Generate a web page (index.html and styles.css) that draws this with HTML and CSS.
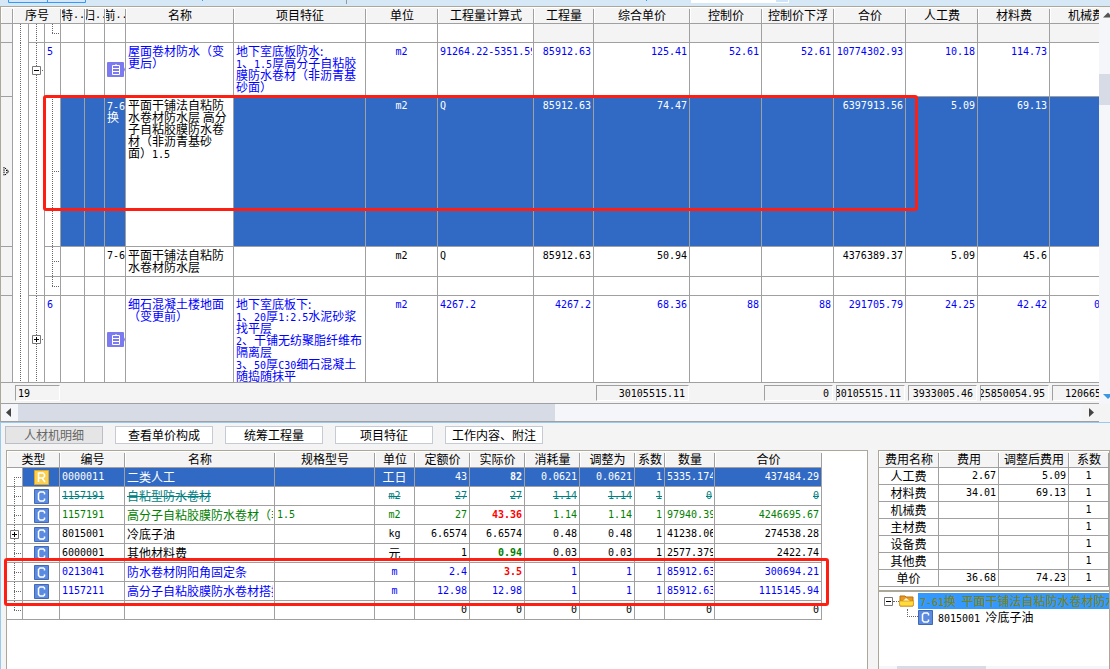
FILE: index.html
```html
<!DOCTYPE html>
<html lang="zh-CN">
<head>
<meta charset="utf-8">
<title>工程量清单</title>
<link rel="stylesheet" href="styles.css">
</head>
<body>
<svg class="defs" aria-hidden="true">
  <symbol id="plus" viewBox="0 0 9 9"><path d="M.5 .5h8v8h-8z" fill="#fff" stroke="#777"/><path d="M2 4.500h5M4.500 2v5" stroke="#000"/></symbol>
  <symbol id="minus" viewBox="0 0 9 9"><path d="M.5 .5h8v8h-8z" fill="#fff" stroke="#777"/><path d="M2 4.500h5" stroke="#000"/></symbol>
  <symbol id="own" viewBox="0 0 18 15"><rect width="17" height="15" rx="1" fill="#7b7bef"/><path d="M17 5l1 2.500l-1 2.500z" fill="#7b7bef"/><path d="M5.500 3.500h7v9h-7zM5.500 6.500h7M5.500 9.500h7M9 2v1.500" fill="none" stroke="#fff"/></symbol>
  <symbol id="mat" viewBox="0 0 15 15"><path d="M.5 .5h14v14h-14z" fill="#5b8be0" stroke="#4169b5"/><path d="M10.500 5.500V4L9.500 3H6L4.500 4.500v6L6 12h3.500l1-1V9.500" fill="none" stroke="#fff" stroke-width="1.500"/></symbol>
  <symbol id="lab" viewBox="0 0 15 15"><path d="M.5 .5h14v14h-14z" fill="#fbd050" stroke="#e0a520"/><path d="M4.500 12V3H9l1.500 1.500v2L9 8H5M8 8l3 4" fill="none" stroke="#fff" stroke-width="1.500"/></symbol>
  <symbol id="folder" viewBox="0 0 15 12"><path d="M1 1h5l1 1h7v9H1z" fill="#e79a1c" stroke="#b9700c"/><path d="M4 6l3-3 4 3z" fill="#fff6d0"/><path d="M0 6h15l-1 5H1z" fill="#ffdc3c" stroke="#d08a10" stroke-width=".7"/></symbol>
</svg>

<header class="ribbon">
  <svg width="1110" height="6" aria-hidden="true"><path d="M8.500 0v2.500h77V0M47.500 0v2" fill="none" stroke="#3399ff"/><path d="M202.500 0v1M646.500 0v1" stroke="#3399ff"/><path d="M346.500 0v4" stroke="#999"/><path d="M691 0h98v3h-98z" fill="#fff"/><path d="M776 0h12v2h-12z" fill="#cfe3f5"/></svg>
</header>

<section class="upper">
  <div class="upper-main">
    <div class="grid-view">
      <table class="grid bill">
        <colgroup><col class="w12"><col class="w16"><col class="w16"><col class="w16"><col class="w24"><col class="w20"><col class="w21"><col class="w108"><col class="w132"><col class="w72"><col class="w96"><col class="w60"><col class="w96"><col class="w72"><col class="w72"><col class="w72"><col class="w72"><col class="w72"><col class="w72"></colgroup>
        <thead>
          <tr><th></th><th colspan="3">序号</th><th><div class="cut">特<span class="n">..</span></div></th><th><div class="cut">归<span class="n">..</span></div></th><th><div class="cut">前<span class="n">..</span></div></th><th>名称</th><th>项目特征</th><th>单位</th><th>工程量计算式</th><th>工程量</th><th>综合单价</th><th>控制价</th><th>控制价下浮</th><th>合价</th><th>人工费</th><th>材料费</th><th>机械费</th></tr>
        </thead>
        <tbody>
          <tr class="h19"><td class="mark"></td><td class="line open"></td><td class="line"></td><td class="line end"></td><td></td><td></td><td></td><td></td><td></td><td></td><td></td><td class="off"></td><td class="off"></td><td class="off"></td><td class="off"></td><td class="off"></td><td class="off"></td><td class="off"></td><td class="off"></td></tr>
          <tr class="h54 blue"><td class="mark"></td><td class="line open"></td><td class="line tick open mid"><svg class="box"><use href="#minus"/></svg></td><td class="n">5</td><td></td><td></td><td class="mid"><svg class="own"><use href="#own"/></svg></td><td>屋面卷材防水（变<br>更后）</td><td>地下室底板防水:<br><span class="n">1</span>、<span class="n">1.5</span>厚高分子自粘胶<br>膜防水卷材（非沥青基<br>砂面）</td><td class="n c">m2</td><td class="n"><div class="clip">91264.22-5351.59</div></td><td class="n r">85912.63</td><td class="n r">125.41</td><td class="n r">52.61</td><td class="n r">52.61</td><td class="n r">10774302.93</td><td class="n r">10.18</td><td class="n r">114.73</td><td></td></tr>
          <tr class="h150 picked"><td class="mark mid"><svg class="cursor"><path d="M1 0v9M2 1l4 3.500L2 8M3 3l1.500 1.500L3 6" fill="none" stroke="#000" stroke-dasharray="1.500 .8"/></svg></td><td class="line open"></td><td class="line open"></td><td class="line tick"></td><td></td><td></td><td><span class="n">7-6</span><br>换</td><td class="edit">平面干铺法自粘防<br>水卷材防水层 高分<br>子自粘胶膜防水卷<br>材（非沥青基砂<br>面）<span class="n">1.5</span></td><td></td><td class="n c">m2</td><td class="n">Q</td><td class="n r">85912.63</td><td class="n r">74.47</td><td></td><td></td><td class="n r">6397913.56</td><td class="n r">5.09</td><td class="n r">69.13</td><td></td></tr>
          <tr class="h30"><td class="mark"></td><td class="line open"></td><td class="line open"></td><td class="line tick"></td><td></td><td></td><td class="n">7-6</td><td>平面干铺法自粘防<br>水卷材防水层</td><td></td><td class="n c">m2</td><td class="n">Q</td><td class="n r">85912.63</td><td class="n r">50.94</td><td></td><td></td><td class="n r">4376389.37</td><td class="n r">5.09</td><td class="n r">45.6</td><td></td></tr>
          <tr class="h19"><td class="mark"></td><td class="line open"></td><td class="line"></td><td class="line end"></td><td></td><td></td><td></td><td></td><td></td><td></td><td></td><td></td><td></td><td></td><td></td><td></td><td></td><td></td><td></td></tr>
          <tr class="h87 blue"><td class="mark"></td><td class="line"></td><td class="line tick mid"><svg class="box"><use href="#plus"/></svg></td><td class="n">6</td><td></td><td></td><td class="mid"><svg class="own"><use href="#own"/></svg></td><td>细石混凝土楼地面<br>（变更前）</td><td>地下室底板下:<br><span class="n">1</span>、<span class="n">20</span>厚<span class="n">1:2.5</span>水泥砂浆<br>找平层<br><span class="n">2</span>、干铺无纺聚脂纤维布<br>隔离层<br><span class="n">3</span>、<span class="n">50</span>厚<span class="n">C30</span>细石混凝土<br>随捣随抹平</td><td class="n c">m2</td><td class="n">4267.2</td><td class="n r">4267.2</td><td class="n r">68.36</td><td class="n r">88</td><td class="n r">88</td><td class="n r">291705.79</td><td class="n r">24.25</td><td class="n r">42.42</td><td class="n cost">0</td></tr>
        </tbody>
        <tfoot>
          <tr><td></td><td colspan="3"><div class="sum left">19</div></td><td colspan="8"></td><td><div class="sum">30105515.11</div></td><td></td><td><div class="sum">0</div></td><td><div class="sum">30105515.11</div></td><td><div class="sum">3933005.46</div></td><td><div class="sum">25850054.95</div></td><td><div class="sum left more">120665</div></td></tr>
        </tfoot>
      </table>
    </div>
    <div class="vbar">
      <svg width="11" height="12"><path d="M4 10.500l5-5 5 5z" fill="#555"/></svg>
      <div class="thumb"></div>
      <svg width="11" height="12"><path d="M4 2l5 5 5-5z" fill="#3b97e3"/></svg>
    </div>
  </div>
  <div class="hbar">
    <svg width="17" height="17"><path d="M10 4v9L5 8.500z" fill="#444"/></svg>
    <div class="thumb"></div><div class="rest"></div>
    <svg class="next" width="17" height="17"><path d="M7 4v9l5-4.500z" fill="#444"/></svg>
  </div>
  <div class="callout first"></div>
</section>

<section class="lower">
  <nav class="tabs">
    <button type="button" class="on">人材机明细</button><button type="button">查看单价构成</button><button type="button">统筹工程量</button><button type="button">项目特征</button><button type="button">工作内容、附注</button>
  </nav>
  <div class="panels">
    <div class="panel main">
      <table class="grid parts">
        <colgroup><col class="w16"><col class="w37"><col class="w65"><col class="w150"><col class="w100"><col class="w40"><col class="w55"><col class="w55"><col class="w55"><col class="w55"><col class="w30"><col class="w50"><col class="w107"></colgroup>
        <thead><tr><th colspan="2">类型</th><th>编号</th><th>名称</th><th>规格型号</th><th>单位</th><th>定额价</th><th>实际价</th><th>消耗量</th><th>调整为</th><th>系数</th><th>数量</th><th>合价</th></tr></thead>
        <tbody>
          <tr class="picked"><td class="line begin"></td><td class="c ico"><svg class="type"><use href="#lab"/></svg></td><td class="n">0000011</td><td>二类人工</td><td></td><td class="c">工日</td><td class="n r">43</td><td class="n r"><b>82</b></td><td class="n r">0.0621</td><td class="n r">0.0621</td><td class="n r">1</td><td class="n"><div class="clip">5335.174</div></td><td class="n r">437484.29</td></tr>
          <tr class="gone"><td class="line tick"></td><td class="c ico"><svg class="type"><use href="#mat"/></svg></td><td class="n">1157191</td><td>自粘型防水卷材</td><td></td><td class="n c">m2</td><td class="n r">27</td><td class="n r">27</td><td class="n r">1.14</td><td class="n r">1.14</td><td class="n r">1</td><td class="n r">0</td><td class="n r">0</td></tr>
          <tr class="green"><td class="line tick"></td><td class="c ico"><svg class="type"><use href="#mat"/></svg></td><td class="n">1157191</td><td><div class="clip">高分子自粘胶膜防水卷材（非</div></td><td class="n">1.5</td><td class="n c">m2</td><td class="n r">27</td><td class="n r"><b class="up">43.36</b></td><td class="n r">1.14</td><td class="n r">1.14</td><td class="n r">1</td><td class="n"><div class="clip">97940.39</div></td><td class="n r">4246695.67</td></tr>
          <tr><td class="line tick"><svg class="box"><use href="#plus"/></svg></td><td class="c ico"><svg class="type"><use href="#mat"/></svg></td><td class="n">8015001</td><td>冷底子油</td><td></td><td class="n c">kg</td><td class="n r">6.6574</td><td class="n r">6.6574</td><td class="n r">0.48</td><td class="n r">0.48</td><td class="n r">1</td><td class="n"><div class="clip">41238.06</div></td><td class="n r">274538.28</td></tr>
          <tr><td class="line tick"></td><td class="c ico"><svg class="type"><use href="#mat"/></svg></td><td class="n">6000001</td><td>其他材料费</td><td></td><td class="c">元</td><td class="n r">1</td><td class="n r"><b class="down">0.94</b></td><td class="n r">0.03</td><td class="n r">0.03</td><td class="n r">1</td><td class="n"><div class="clip">2577.379</div></td><td class="n r">2422.74</td></tr>
          <tr class="blue"><td class="line tick"></td><td class="c ico"><svg class="type"><use href="#mat"/></svg></td><td class="n">0213041</td><td>防水卷材阴阳角固定条</td><td></td><td class="n c">m</td><td class="n r">2.4</td><td class="n r"><b class="up">3.5</b></td><td class="n r">1</td><td class="n r">1</td><td class="n r">1</td><td class="n"><div class="clip">85912.63</div></td><td class="n r">300694.21</td></tr>
          <tr class="blue"><td class="line tick"></td><td class="c ico"><svg class="type"><use href="#mat"/></svg></td><td class="n">1157211</td><td><div class="clip">高分子自粘胶膜防水卷材搭接</div></td><td></td><td class="n c">m</td><td class="n r">12.98</td><td class="n r">12.98</td><td class="n r">1</td><td class="n r">1</td><td class="n r">1</td><td class="n"><div class="clip">85912.63</div></td><td class="n r">1115145.94</td></tr>
          <tr><td class="line end"></td><td></td><td></td><td></td><td></td><td></td><td class="n r">0</td><td class="n r">0</td><td class="n r">0</td><td class="n r">0</td><td></td><td class="n r">0</td><td class="n r">0</td></tr>
        </tbody>
      </table>
    </div>
    <aside class="panel side">
      <table class="grid fees">
        <colgroup><col class="w60"><col class="w60"><col class="w70"><col class="w40"></colgroup>
        <thead><tr><th>费用名称</th><th>费用</th><th>调整后费用</th><th>系数</th></tr></thead>
        <tbody>
          <tr><td class="c">人工费</td><td class="n r">2.67</td><td class="n r">5.09</td><td class="n c">1</td></tr>
          <tr><td class="c">材料费</td><td class="n r">34.01</td><td class="n r">69.13</td><td class="n c">1</td></tr>
          <tr><td class="c">机械费</td><td></td><td></td><td class="n c">1</td></tr>
          <tr><td class="c">主材费</td><td></td><td></td><td class="n c">1</td></tr>
          <tr><td class="c">设备费</td><td></td><td></td><td class="n c">1</td></tr>
          <tr><td class="c">其他费</td><td></td><td></td><td class="n c">1</td></tr>
          <tr><td class="c">单价</td><td class="n r">36.68</td><td class="n r">74.23</td><td class="n c">1</td></tr>
        </tbody>
      </table>
      <div class="tree">
        <div class="node"><svg class="box"><use href="#minus"/></svg><i class="dots"></i><svg class="folder"><use href="#folder"/></svg><span class="label chosen"><span class="n">7-61</span>换 &nbsp;平面干铺法自粘防水卷材防水层</span></div>
        <div class="node child"><i class="elbow"></i><svg class="type"><use href="#mat"/></svg><span class="label"><span class="n">8015001</span> &nbsp;冷底子油</span></div>
        <div class="tree-bar"><div></div></div>
      </div>
    </aside>
  </div>
  <div class="callout second"></div>
</section>
</body>
</html>
```
FILE: styles.css
```css
* { box-sizing: border-box; }
body {
  margin: 0;
  height: 100vh;
  display: flex;
  flex-direction: column;
  overflow: hidden;
  background: #f4f4f4;
  color: #000;
  font: 12px/12px "Noto Sans CJK SC", sans-serif;
}
svg { display: block; }
.defs { position: absolute; width: 0; height: 0; }
.n { font-family: "DejaVu Sans Mono", "Liberation Mono", monospace; font-size: 10px; }
td span.n { line-height: 0; }
.ribbon { height: 6px; background: #d6e8f6; overflow: hidden; }

/* data grids */
.grid { table-layout: fixed; border-collapse: separate; border-spacing: 0; }
.grid th {
  height: 17px;
  padding: 0;
  font-weight: normal;
  white-space: nowrap;
  overflow: hidden;
  background: linear-gradient(#a0a0a0, #a0a0a0) right bottom / 1px 14px no-repeat #f4f4f4;
  border-bottom: 1px solid #a0a0a0;
  box-shadow: inset 1px 1px #fff;
}
.grid td {
  padding: 2px 2px 0;
  vertical-align: top;
  white-space: nowrap;
  overflow: hidden;
  border-right: 1px solid #a0a0a0;
  border-bottom: 1px solid #a0a0a0;
  background-color: #fff;
}
.grid td.n { padding-top: 3px; }
.c { text-align: center; }
.r { text-align: right; }
.cut { display: flex; justify-content: center; overflow: hidden; margin: 0 1px; }
.clip { overflow: hidden; margin-right: -1px; }
.grid .mid { vertical-align: middle; padding: 0; }
.blue { color: #0000ff; }
.green { color: #008000; }
.gone { color: #008080; }
.gone td { text-decoration: line-through; }
.up { color: #ff0000; }
.down { color: #008000; }
.grid .picked td { background-color: #316ac5; color: #fff; }
.grid .picked td.edit { background-color: #fff; color: #000; }
.grid .picked td.line { background-color: #fff; }
.grid .picked td.mark, .grid td.mark, .grid td.off { background-color: #f4f4f4; }
.grid td.open { border-bottom: 0; }

/* dotted tree connectors */
.line {
  background-image: repeating-linear-gradient(to bottom, #666 0 1px, transparent 1px 2px), repeating-linear-gradient(to right, #666 0 1px, transparent 1px 2px);
  background-repeat: no-repeat;
  background-size: 1px 100%, 0 0;
  background-position: 7px 0, 7px 50%;
}
.line.tick { background-size: 1px 100%, 8px 1px; }
.line.end { background-size: 1px 50%, 8px 1px; }
.line.begin { background-size: 1px 50%, 8px 1px; background-position: 7px 100%, 7px 50%; }
.box { width: 9px; height: 9px; margin: 0 auto; flex: none; }
.own { width: 18px; height: 15px; margin-left: 2px; }
.cursor { width: 8px; height: 9px; margin-left: 2px; }
.type { width: 15px; height: 15px; flex: none; }

/* upper grid */
.upper { position: relative; border-top: 1px solid #aca899; border-bottom: 1px solid #99c9ef; }
.upper-main { display: flex; }
.grid-view { flex: 1; min-width: 0; overflow: hidden; border-left: 1px solid #aca899; }
.bill { width: 1121px; }
.h19 { height: 19px; }
.h30 { height: 30px; }
.h54 { height: 54px; }
.h87 { height: 87px; }
.h150 { height: 150px; }
.grid td.cost { padding-left: 44px; }
.bill tfoot td { height: 21px; padding: 2px 1px 2px 2px; background: #f4f4f4; border-right: 0; }
.sum {
  display: flex;
  justify-content: flex-end;
  overflow: hidden;
  padding: 2px 3px 0 1px;
  height: 16px;
  border: 1px solid #fff;
  border-top-color: #a0a0a0;
  border-left-color: #a0a0a0;
  font: 10px/12px "DejaVu Sans Mono", monospace;
}
.sum.left { justify-content: flex-start; padding-left: 2px; }
.sum.more { padding-left: 12px; }
.vbar { width: 11px; display: flex; flex-direction: column; justify-content: space-between; background: #f5f6fa; overflow: hidden; }
.vbar .thumb { height: 31px; margin: 55px 0 auto; background: #d6dbe5; }
.hbar { display: flex; height: 18px; margin-right: 11px; border-left: 1px solid #aca899; border-bottom: 1px solid #a0a0a0; background: #f5f6fa; }
.hbar .thumb { flex: 51; background: #d6dbe5; }
.hbar .rest { flex: 50; }
.hbar .next { background: #f4f4f4; }

/* annotation frames */
.callout { position: absolute; border: 3px solid #ff1e12; border-radius: 3px; pointer-events: none; }
.first { left: 43px; top: 88px; width: 875px; height: 116px; }
.second { left: 3px; top: 135px; width: 825px; height: 48px; }

/* lower area */
.lower { position: relative; flex: 1; min-height: 0; display: flex; flex-direction: column; border-left: 1px solid #99c9ef; }
.tabs { display: flex; gap: 12px; padding: 3px 4px 6px; }
.tabs button {
  width: 98px;
  height: 18px;
  padding: 0;
  font: inherit;
  color: #000;
  background: #fff;
  border: 1px solid #c5cad4;
}
.tabs .on { background: #e5e5e5; color: #666; border-color: #b9bec8; }
.panels { flex: 1; min-height: 0; display: flex; gap: 10px; padding-left: 5px; }
.panel { background: #fff; border: 1px solid #aca899; border-bottom: 0; overflow: hidden; }
.main { flex: 1; min-width: 0; }
.side { width: 232px; display: flex; flex-direction: column; }
.parts { width: 815px; }
.parts tbody tr { height: 19px; }
.grid.parts td { vertical-align: middle; padding: 0 2px; }
.grid.parts td.line, .grid.parts td.ico { padding: 0; }
.parts .type { margin: 0 auto; }
.fees { width: 230px; }
.fees tbody tr { height: 17px; }
.grid.fees td { vertical-align: middle; padding: 0 2px; }

/* resource tree */
.tree { flex: 1; display: flex; flex-direction: column; margin-top: 3px; padding-top: 1px; border-top: 2px solid #aca899; }
.node { display: flex; align-items: center; height: 16px; padding-left: 5px; }
.node .box { margin: 0; }
.dots { width: 6px; border-top: 1px dotted #666; }
.folder { width: 15px; height: 12px; flex: none; margin-right: 4px; }
.label { flex: 1; min-width: 0; line-height: 16px; padding-left: 2px; overflow: hidden; white-space: nowrap; }
.label .n { line-height: 0; }
.chosen { background: #3399ff; color: #808000; }
.child { padding-left: 28px; }
.child .label { padding-left: 5px; }
.elbow { width: 11px; height: 8px; align-self: flex-start; border-left: 1px dotted #666; border-bottom: 1px dotted #666; }
.tree-bar { margin-top: auto; height: 3px; padding-left: 18px; background: #f5f6fa; }
.tree-bar div { width: 89px; height: 3px; background: #d6dbe5; }

/* column widths */
.w12 { width: 12px; }
.w16 { width: 16px; }
.w20 { width: 20px; }
.w21 { width: 21px; }
.w24 { width: 24px; }
.w30 { width: 30px; }
.w37 { width: 37px; }
.w40 { width: 40px; }
.w50 { width: 50px; }
.w55 { width: 55px; }
.w60 { width: 60px; }
.w65 { width: 65px; }
.w70 { width: 70px; }
.w72 { width: 72px; }
.w96 { width: 96px; }
.w100 { width: 100px; }
.w107 { width: 107px; }
.w108 { width: 108px; }
.w132 { width: 132px; }
.w150 { width: 150px; }
```
